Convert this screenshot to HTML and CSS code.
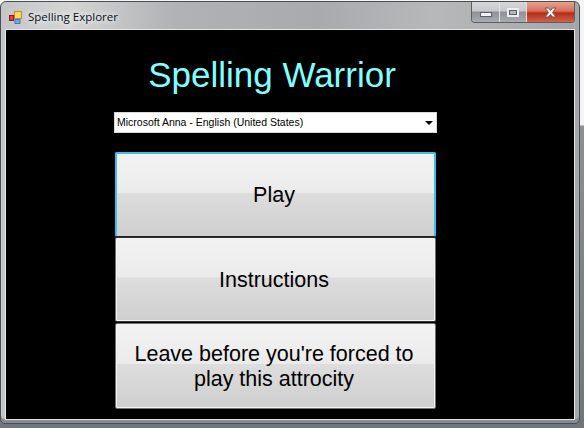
FILE: index.html
```html
<!DOCTYPE html>
<html lang="en">
<head>
    <meta charset="UTF-8">
    <meta name="viewport" content="width=device-width, initial-scale=1.0">
    <title>Spelling Explorer</title>
    <link rel="stylesheet" href="styles.css">
</head>
<body>
    <div class="window">
        <div class="titlebar">
            <svg class="app-icon" width="16" height="16" viewBox="0 0 16 16">
                <rect x="0.5" y="5.5" width="4" height="5" fill="#e04040" stroke="#a01010"/>
                <rect x="5.5" y="1.5" width="7" height="7" fill="#f8d860" stroke="#c09020"/>
                <rect x="6" y="9.5" width="5" height="4" fill="#70a8f0" stroke="#4878c8"/>
            </svg>
            <span class="caption">Spelling Explorer</span>
            <div class="window-buttons">
                <div class="win-btn min-btn"><span class="min-glyph"></span></div>
                <div class="win-btn max-btn"><span class="max-glyph"></span></div>
                <div class="win-btn close-btn">
                    <svg width="13" height="11" viewBox="0 0 13 11">
                        <path d="M1 1 H4.5 L6.5 3.5 L8.5 1 H12 L8.5 5.5 L12 10 H8.5 L6.5 7.5 L4.5 10 H1 L4.5 5.5 Z" fill="#f4f0ee" stroke="#6a5a58" stroke-width="1"/>
                    </svg>
                </div>
            </div>
        </div>
        <div class="client">
            <h1 class="game-title">Spelling Warrior</h1>
            <div class="combo">
                <span>Microsoft Anna - English (United States)</span>
                <span class="combo-arrow"></span>
            </div>
            <div class="buttons">
                <button class="big-btn focused">Play</button>
                <button class="big-btn">Instructions</button>
                <button class="big-btn">Leave before you're forced to play this attrocity</button>
            </div>
        </div>
    </div>
</body>
</html>
```

FILE: styles.css
```css
html, body {
    margin: 0;
    height: 100%;
}
body {
    width: 584px;
    height: 428px;
    overflow: hidden;
    padding-top: 1px;
    box-sizing: border-box;
    font-family: "Liberation Sans", sans-serif;
    background: linear-gradient(#f4f4f4 0, #f4f4f4 125px, #8a9094 126px, #6e767c 100%);
}
.window {
    width: 580px;
    height: 423px;
    box-sizing: border-box;
    border: 1px solid #4a4f54;
    border-radius: 6px 6px 5px 5px;
    padding: 0 5px 5px;
    background: linear-gradient(90deg, #c4c6c8 0, #d4d4d4 12%, #b0b2b5 30%, #a8aaad 55%, #b6b8ba 75%, #a4a6a8 100%);
    box-shadow: inset 0 -4px 0 #868c92;
}
.titlebar {
    height: 27px;
    display: flex;
    align-items: flex-start;
}
.app-icon {
    margin: 8px 0 0 3px;
}
.caption {
    margin: 6px 0 0 3px;
    font-family: "Open Sans", "DejaVu Sans", sans-serif;
    font-size: 11.5px;
    line-height: 18px;
    color: #08101c;
    text-shadow: 0 0 6px #f4f4f4, 0 0 6px #f4f4f4;
}
.window-buttons {
    margin-left: auto;
    margin-right: -1px;
    display: flex;
    height: 20px;
    border: 1px solid #5a6066;
    border-top: none;
    border-radius: 0 0 4px 4px;
    overflow: hidden;
}
.win-btn {
    display: flex;
    align-items: center;
    justify-content: center;
    height: 20px;
    box-sizing: border-box;
}
.min-btn {
    width: 28px;
    border-right: 1px solid #dfe1e3;
    background: linear-gradient(#d6d8da 0, #c6c8cb 45%, #8e9297 50%, #a8abaf 100%);
}
.max-btn {
    width: 27px;
    border-right: 1px solid #dfe1e3;
    background: linear-gradient(#d6d8da 0, #c6c8cb 45%, #8e9297 50%, #a8abaf 100%);
}
.close-btn {
    width: 47px;
    background: linear-gradient(#e6a292 0, #d8705a 45%, #b82c14 55%, #d0624a 100%);
}
.min-glyph {
    display: block;
    width: 10px;
    height: 3px;
    margin-top: 5px;
    background: #f2f3f4;
    border: 1px solid #5a6068;
}
.max-glyph {
    display: block;
    width: 6px;
    height: 3px;
    background: #b4b8bc;
    border: 1px solid #5a6068;
    outline: 2px solid #eceeef;
    outline-offset: 0;
}
.client {
    width: 568px;
    height: 389px;
    margin-top: 1px;
    box-sizing: border-box;
    padding-left: 108px;
    background: #000;
    box-shadow: 0 0 0 1px #e4e6e8;
}
.game-title {
    width: 316px;
    margin: 0;
    padding-top: 22px;
    height: 82px;
    box-sizing: border-box;
    font-size: 35px;
    line-height: 46px;
    font-weight: normal;
    text-align: center;
    color: #80ffff;
}
.combo {
    width: 323px;
    height: 21px;
    box-sizing: border-box;
    display: flex;
    align-items: center;
    justify-content: space-between;
    padding: 0 3px 2px 2px;
    background: #fff;
    border: 1px solid #d8d8d8;
    font-family: "Liberation Sans", sans-serif;
    font-size: 10.5px;
    color: #000;
}
.combo-arrow {
    width: 0;
    height: 0;
    border-left: 4px solid transparent;
    border-right: 4px solid transparent;
    border-top: 4px solid #000;
    margin-top: 3px;
}
.buttons {
    width: 321px;
    margin: 19px 0 0 1px;
    display: flex;
    flex-direction: column;
}
.big-btn {
    width: 321px;
    height: 85px;
    padding: 2px 16px 0 13px;
    box-sizing: border-box;
    border: 1px solid #707070;
    border-top-color: #303030;
    border-bottom-color: #303030;
    border-radius: 2px;
    background: linear-gradient(#f2f2f2 0, #ebebeb 47%, #dddddd 48%, #cfcfcf 100%);
    box-shadow: inset 0 0 0 1px #f4f4f4;
    font-family: "Liberation Sans", sans-serif;
    font-size: 21.5px;
    line-height: 25px;
    color: #000;
}
.big-btn:last-child {
    height: 86px;
    margin-top: 1px;
    border-top-color: #707070;
    border-bottom-color: #707070;
}
.focused {
    border-width: 2px 2px 1px;
    border-color: #3cc0ec;
    border-bottom-color: #202020;
    padding: 1px 15px 0 12px;
    box-shadow: none;
}
```
